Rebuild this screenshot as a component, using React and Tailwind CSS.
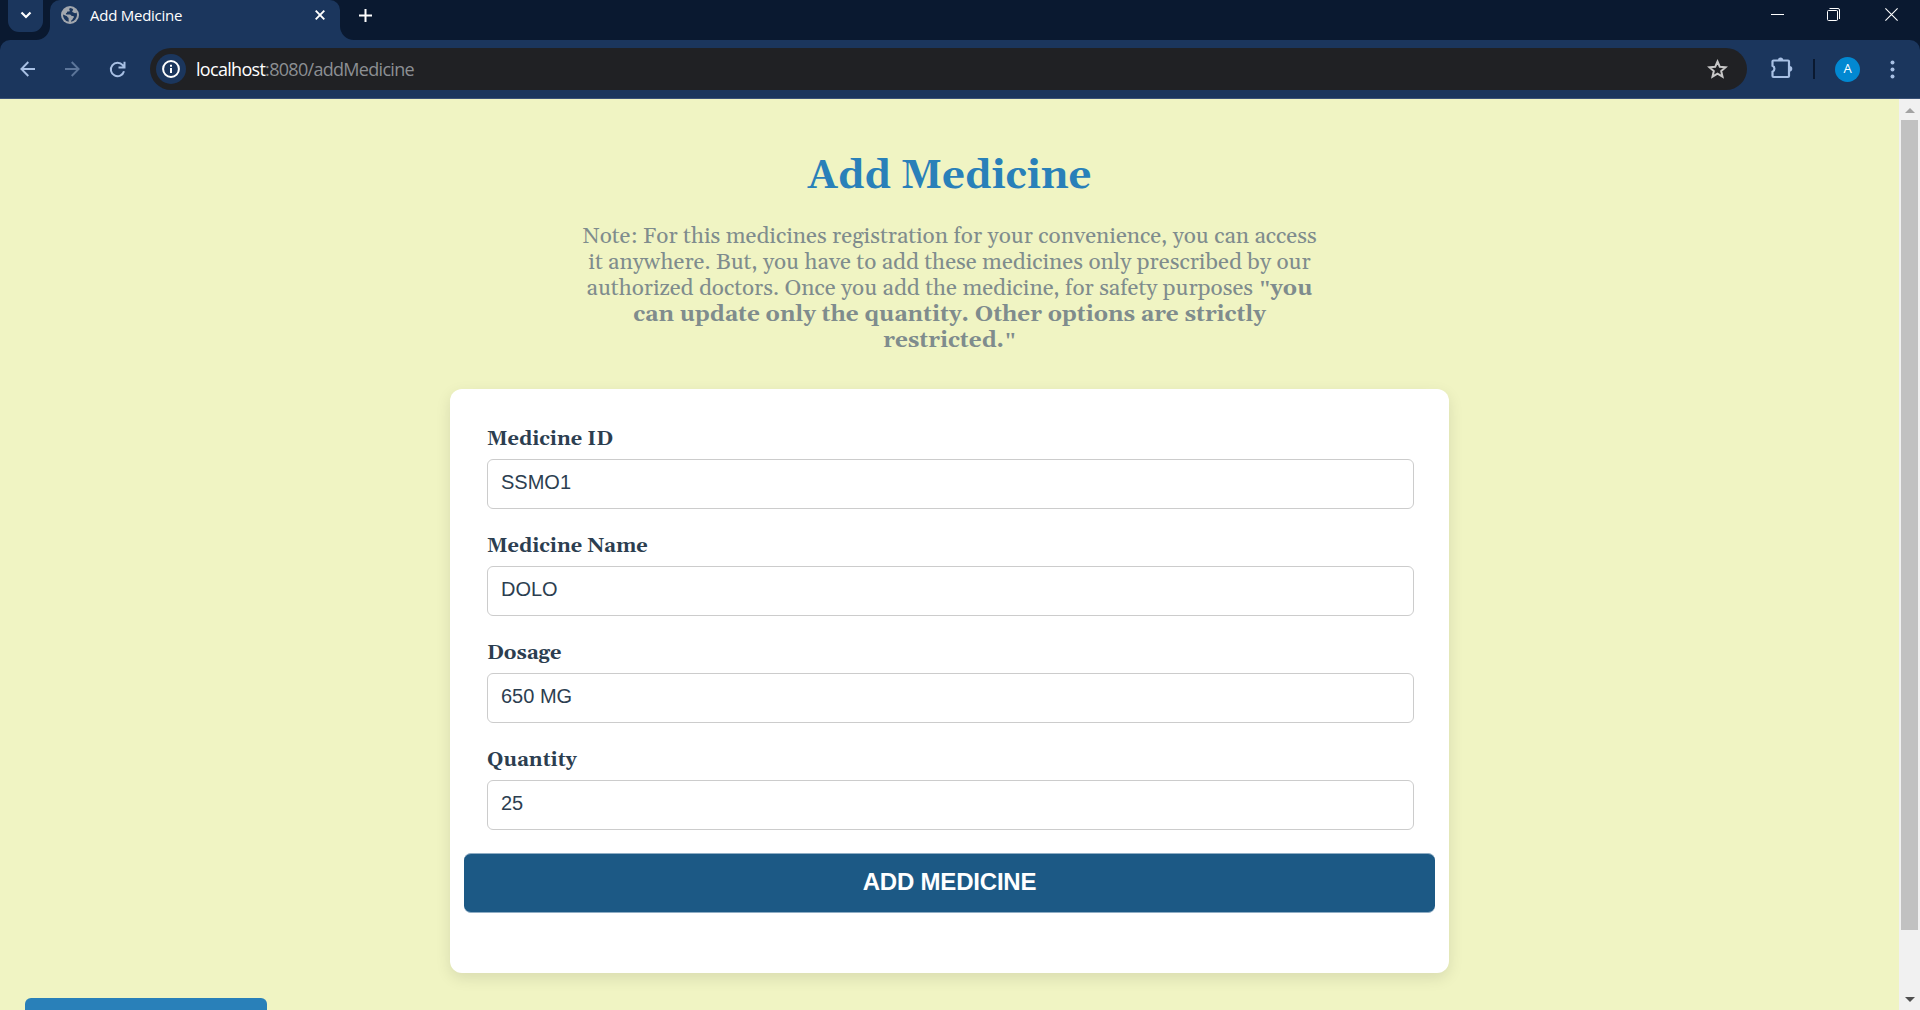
import React from "react";

const fields = [
  ["Medicine ID", "SSMO1"],
  ["Medicine Name", "DOLO"],
  ["Dosage", "650 MG"],
  ["Quantity", "25"],
];

function TabStrip() {
  return (
    <div className="flex h-10 items-start bg-[#0a1930]">
      <div className="ml-2 flex h-8 w-[35px] items-center justify-center rounded-b-[11px] bg-[#1b365d]">
        <svg width="12" height="8" viewBox="0 0 12 8" className="-mt-0.5" fill="none" stroke="#fff" strokeWidth="2.2">
          <path d="M1.500 1.500 6 6l4.500-4.500" />
        </svg>
      </div>
      <div className="relative ml-[7px] flex h-10 w-[290px] items-start rounded-t-[10px] bg-[#1b365d]">
        <svg className="absolute -left-[14px] bottom-0" width="14" height="14" viewBox="0 0 14 14">
          <path d="M14 0v14H0A14 14 0 0 0 14 0z" fill="#1b365d" />
        </svg>
        <svg className="absolute -right-[14px] bottom-0" width="14" height="14" viewBox="0 0 14 14">
          <path d="M0 0v14h14A14 14 0 0 1 0 0z" fill="#1b365d" />
        </svg>
        <svg className="ml-[11px] mt-1.5" width="18" height="18" viewBox="0 0 18 18">
          <circle cx="9" cy="9" r="9" fill="#a2a7ae" />
          <path
            d="M9 2c-.8.8-1 1.600-.4 2.200.5.500.2 1.300-.8 1.300H6.500c-.6 0-.3 1.300-1 1.500-.8.200-.8 1.500 0 1.500h3.300c1.200 0 1.300 1.500 2.200 1.500h1c1 0 1.200 1.300.3 2-.7.500-.4 1.500-1.300 1.900-.8.400-1 1-1 1.900A7 7 0 0 0 16 9c0-1-.2-1.800-.5-2.500-.6.800-1.900.9-2.600.2-.5-.5-1.700-.3-1.700-1.200s.9-.8.900-1.700C12 2.800 10.500 2 9 2zM2 8.500l3.500 1.600c.9.300.8 1.200 1.500 1.400.8.200.6 1.200.6 2 0 .8.300 1.500.1 2.300A7 7 0 0 1 2 8.500z"
            fill="#1b365d"
          />
        </svg>
        <span className="ml-[11px] mt-1 font-['Open_Sans'] text-[15px] leading-[22px] tracking-[-0.25px] text-white">
          Add Medicine
        </span>
        <svg className="ml-auto mr-[15px] mt-[10px]" width="10" height="10" viewBox="0 0 10 10" stroke="#fff" strokeWidth="1.900">
          <path d="M.7.7l8.600 8.600M9.300.7.700 9.300" />
        </svg>
      </div>
      <svg className="ml-[19px] mt-[9px]" width="13" height="13" viewBox="0 0 13 13" stroke="#fff" strokeWidth="2">
        <path d="M6.500 0v13M0 6.500h13" />
      </svg>
      <div className="ml-auto mr-[22px] flex items-start">
        <svg className="mt-[14px]" width="13" height="1" viewBox="0 0 13 1">
          <rect width="13" height="1" fill="#fff" />
        </svg>
        <svg className="ml-[43px] mt-2" width="13" height="13" viewBox="0 0 13 13" fill="none" stroke="#fff">
          <path d="M2.500.5H11A1.500 1.500 0 0 1 12.500 2v9" />
          <path d="M10.500 3v9" stroke="#8f98a6" />
          <rect x=".5" y="2.500" width="10" height="10" rx="1" />
        </svg>
        <svg className="ml-[45px] mt-2" width="13" height="13" viewBox="0 0 13 13" stroke="#fff" strokeWidth="1.100">
          <path d="M.4.400l12.200 12.200M12.600.4.400 12.600" />
        </svg>
      </div>
    </div>
  );
}

function Toolbar() {
  return (
    <div className="bg-[#0a1930]">
      <div className="flex h-[59px] items-start rounded-t-[10px] border-b border-[#3b5277] bg-[#1b365d] pt-2">
        <div className="flex h-[42px] items-center">
          <svg className="ml-5" width="15" height="16" viewBox="0 0 15 16" fill="none" stroke="#a8c0e4" strokeWidth="1.900">
            <path d="M15 8H1.500M8.300 1 1.400 8l6.900 7" />
          </svg>
          <svg className="ml-[30px]" width="15" height="16" viewBox="0 0 15 16" fill="none" stroke="#5c7599" strokeWidth="1.900">
            <path d="M0 8h13.500M6.700 1l6.900 7-6.900 7" />
          </svg>
          <svg className="ml-[29px]" width="17" height="17" viewBox="0 0 17 17" fill="none" stroke="#a8c0e4" strokeWidth="2">
            <path d="M15 10.200A6.700 6.700 0 1 1 13.700 4.200L15.500 6.300M15.500.7v5.800H9.500" />
          </svg>
        </div>
        <div className="ml-6 flex h-[42px] w-[1597px] items-center rounded-full bg-[#202124]">
          <div className="ml-1.5 flex size-[30px] items-center justify-center rounded-full bg-[#1b365d]">
            <svg width="18" height="18" viewBox="0 0 18 18" fill="none" stroke="#fff" strokeWidth="2">
              <circle cx="9" cy="9" r="7.900" />
              <path d="M9 8v5M9 4.800v1.900" />
            </svg>
          </div>
          <div className="ml-[10px] font-['Open_Sans'] text-[18px] leading-6 tracking-[-0.7px] text-[#8c8f93]">
            <span className="text-white">localhost</span>:8080/addMedicine
          </div>
          <svg className="ml-auto mr-[19px]" width="21" height="20" viewBox="0 0 21 20" fill="none" stroke="#c7c7c7" strokeWidth="2">
            <path d="M10.500 2.500l2.300 5.300 5.800.5-4.400 3.800 1.300 5.600-5-3-5 3 1.300-5.600-4.400-3.800 5.800-.5z" />
          </svg>
        </div>
        <div className="flex h-[42px] items-center">
          <svg className="-mt-0.5 ml-6" width="22" height="22" viewBox="0 0 22 22">
            <path
              d="M2.500 3.500H17a1 1 0 0 1 1 1V19a1 1 0 0 1-1 1H2.500a1 1 0 0 1-1-1v-4.200a3.300 3.300 0 0 0 0-6V4.500a1 1 0 0 1 1-1z"
              fill="none"
              stroke="#a8c0e4"
              strokeWidth="2.200"
            />
            <path d="M7 3a2.600 2.600 0 0 1 5.200 0zM18.500 9a2.800 2.800 0 0 1 0 5.600z" fill="#a8c0e4" />
          </svg>
          <div className="ml-5 h-5 w-0.5 bg-[#0a1930]" />
          <div className="ml-5 flex size-[25px] items-center justify-center rounded-full bg-[#0288d1] font-['Open_Sans'] text-[13px] font-medium text-white">
            A
          </div>
          <svg className="ml-[30px]" width="5" height="19" viewBox="0 0 5 19" fill="#a8c0e4">
            <circle cx="2.500" cy="2.500" r="2" />
            <circle cx="2.500" cy="9.500" r="2" />
            <circle cx="2.500" cy="16.500" r="2" />
          </svg>
        </div>
      </div>
    </div>
  );
}

function Scrollbar() {
  return (
    <div className="flex w-[21px] flex-col items-center bg-[#f1f1f1]">
      <div className="flex h-[21px] items-center">
        <svg width="10" height="5" viewBox="0 0 10 5" className="mt-0.5">
          <path d="M5 0l5 5H0z" fill="#a3a3a3" />
        </svg>
      </div>
      <div className="h-[810px] w-[17px] bg-[#c1c1c1]" />
      <div className="mt-auto flex h-[21px] items-center">
        <svg width="10" height="5" viewBox="0 0 10 5">
          <path d="M0 0h10L5 5z" fill="#505050" />
        </svg>
      </div>
    </div>
  );
}

function MedicineForm() {
  return (
    <div className="mt-[35px] h-[584px] w-[999px] shrink-0 rounded-[12px] bg-white px-[37px] pt-[36px] shadow-[0_5px_15px_rgba(0,0,0,0.1)]">
      {fields.map(([label, value]) => (
        <div key={label} className="h-[107px]">
          <div className="h-[34px] text-[20px] font-bold leading-7 text-[#2c3e50]">{label}</div>
          <div className="h-[50px] w-[927px] rounded-[6px] border border-[#ccc] pl-[13px] font-['Liberation_Sans'] text-[20px] leading-[45px] text-[#2c3e50]">
            {value}
          </div>
        </div>
      ))}
      <div className="-mx-[23px] flex h-[60px] justify-center rounded-[7px] border-y border-[#8fadc4] bg-[#1c5985] font-['Liberation_Sans'] text-[24px] font-bold leading-[55px] tracking-[-0.2px] text-white">
        ADD MEDICINE
      </div>
    </div>
  );
}

function Quote() {
  return <span className="font-['Liberation_Serif'] text-[23px] font-bold tracking-[-1px]">"</span>;
}

function Note() {
  return (
    <div className="mt-6 flex w-[750px] shrink-0 flex-col items-center whitespace-pre text-[22.500px] leading-[26px] text-[#7f8c8d]">
      <div>Note: For this medicines registration for your convenience, you can access</div>
      <div>it anywhere. But, you have to add these medicines only prescribed by our</div>
      <div className="flex">
        <span>authorized doctors. Once you add the medicine, for safety purposes </span>
        <Quote />
        <b>you</b>
      </div>
      <b>can update only the quantity. Other options are strictly</b>
      <div className="flex">
        <b>restricted.</b>
        <Quote />
      </div>
    </div>
  );
}

export default function App() {
  return (
    <div className="flex h-[1010px] w-[1920px] flex-col overflow-hidden bg-[#f0f4c3]">
      <TabStrip />
      <Toolbar />
      <div className="flex min-h-0 flex-1">
        <div className="flex flex-1 flex-col items-center overflow-hidden font-[Gelasio,Georgia,'Liberation_Serif',serif]">
          <h1 className="mt-[55px] text-[40px] font-bold leading-[46px] text-[#2980b9]">Add Medicine</h1>
          <Note />
          <MedicineForm />
          <div className="ml-[25px] mt-[25px] h-[50px] w-[242px] shrink-0 self-start rounded-[6px] bg-[#2980b9]" />
        </div>
        <Scrollbar />
      </div>
    </div>
  );
}
